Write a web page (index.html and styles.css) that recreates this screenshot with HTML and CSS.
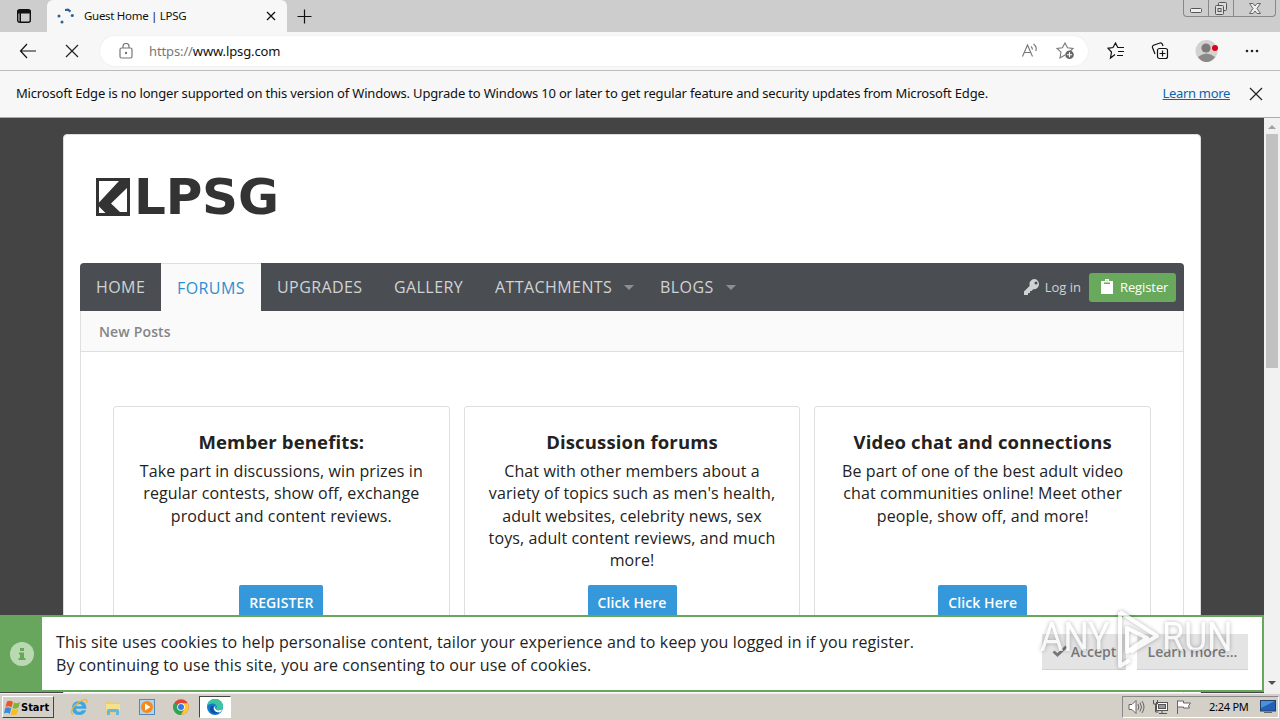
FILE: index.html
```html
<!DOCTYPE html>
<html lang="en">

<head>
    <meta charset="UTF-8">
    <meta name="viewport" content="width=device-width, initial-scale=1.0">
    <title>Guest Home | LPSG</title>
    <link rel="stylesheet" href="styles.css">
</head>

<body>
    <div class="tab-strip">
        <svg class="tab-menu-icon" width="16" height="16" viewBox="0 0 16 16">
            <rect x="1.7" y="1.7" width="12.6" height="12.6" rx="2" fill="none" stroke="#111" stroke-width="1.4"/>
            <path d="M1.5 2h13v3.5H5V14H3.500V5.500h-2z" fill="#111"/>
        </svg>
        <div class="tab">
            <svg width="18" height="18" viewBox="0 0 18 18" fill="#2a6496">
                <circle cx="2" cy="9" r="1.500"/>
                <circle cx="5" cy="15" r="1.500"/>
                <circle cx="15.300" cy="8.500" r="1.600"/>
                <path d="M8 3l3-.3 2.500 2" fill="none" stroke="#2a6496" stroke-width="2.200"/>
            </svg>
            <span class="tab-title">Guest Home | LPSG</span>
            <svg class="tab-close" width="10" height="10" viewBox="0 0 10 10">
                <path d="M1 1l8 8M9 1l-8 8" stroke="#111" stroke-width="1.300"/>
            </svg>
        </div>
        <svg class="tab-new" width="15" height="15" viewBox="0 0 15 15">
            <path d="M7.500 0.500v14M.5 7.500h14" stroke="#111" stroke-width="1.200"/>
        </svg>
        <div class="window-buttons">
            <span class="win-btn"><svg width="12" height="5" viewBox="0 0 12 5"><rect x=".5" y=".5" width="11" height="4" rx="1" fill="#eee" stroke="#555"/></svg></span>
            <span class="win-btn"><svg width="14" height="13" viewBox="0 0 14 13" fill="#ddd" stroke="#555"><rect x="4.500" y=".5" width="8" height="8" rx="1"/><rect x="1.500" y="3.500" width="8" height="9" rx="1"/><rect x="4" y="6.500" width="3" height="3"/></svg></span>
            <span class="win-btn wide"><svg width="12" height="11" viewBox="0 0 12 11"><path d="M.5.500h3.500l2 2.500 2-2.500h3.500l-3.500 5 3.500 5H8l-2-2.500-2 2.500H.5l3.500-5z" fill="#eee" stroke="#666"/></svg></span>
        </div>
    </div>

    <div class="toolbar">
        <svg class="back" width="18" height="16" viewBox="0 0 18 16" fill="none" stroke="#111" stroke-width="1.200">
            <path d="M8 1L1.500 8 8 15M1.500 8H17"/>
        </svg>
        <svg class="stop" width="14" height="14" viewBox="0 0 14 14">
            <path d="M1 1l12 12M13 1L1 13" stroke="#222" stroke-width="1.200"/>
        </svg>
        <div class="address">
            <svg width="14" height="16" viewBox="0 0 14 16" fill="none" stroke="#777" stroke-width="1.200">
                <rect x="1" y="5" width="12" height="10" rx="1.500"/>
                <path d="M4 5V3.500a3 3 0 0 1 6 0V5"/>
                <circle cx="7" cy="10" r=".6" fill="#777"/>
            </svg>
            <span class="url"><span class="scheme">https://</span>www.lpsg.com</span>
            <svg class="read-aloud" width="17" height="16" viewBox="0 0 17 16" fill="none" stroke="#777" stroke-width="1.100">
                <path d="M1.500 13.500L6.500 2l5 11.500M3.300 9.500h6.400M10 3.500c1 .8 1.500 2 1.200 3.200M12.500 1c2.500 1.800 3.300 4.500 2.200 7"/>
            </svg>
            <svg width="18" height="18" viewBox="0 0 18 18" fill="none" stroke="#777" stroke-width="1.100">
                <path d="M9 13l-5 3 1-5.800L1 6.500l5.400-.8L9 1l2.500 4.700 5.500.8-3 2.800"/>
                <circle cx="13.500" cy="12.800" r="4.300" fill="#666" stroke="none"/>
                <path d="M13.500 10.300v5M11 12.800h5" stroke="#fff"/>
            </svg>
        </div>
        <svg class="favorites" width="18" height="18" viewBox="0 0 18 18" fill="none" stroke="#111" stroke-width="1.200">
            <path d="M8 12.500L3.500 16l1-6L1 6.300l5-.8L8.500 1l2.300 4.500H17M11 9.500h6M10 13.500h6"/>
        </svg>
        <svg class="collections" width="18" height="18" viewBox="0 0 18 18" fill="none" stroke="#111" stroke-width="1.200">
            <rect x="6.500" y="6.500" width="10" height="10" rx="2"/>
            <path d="M11.500 8.500v6M8.500 11.500h6M4 12L1.500 5.500Q1 4 2.500 3.200L9 1q1.700-.4 2.500 1.500l.5 1.500"/>
        </svg>
        <svg class="profile" width="24" height="24" viewBox="0 0 24 24">
            <circle cx="11.500" cy="12" r="11" fill="#d3d2d1"/>
            <circle cx="11" cy="9" r="4.600" fill="#7d7b7a"/>
            <path d="M3 18q8.500-7 17 0-3.500 5-8.500 5T3 18z" fill="#8b8988"/>
            <circle cx="20" cy="9" r="3" fill="#e0001b"/>
        </svg>
        <svg class="more" width="14" height="4" viewBox="0 0 14 4" fill="#222">
            <circle cx="2" cy="2" r="1.300"/><circle cx="7" cy="2" r="1.300"/><circle cx="12" cy="2" r="1.300"/>
        </svg>
    </div>

    <div class="infobar">
        <span class="infobar-text">Microsoft Edge is no longer supported on this version of Windows. Upgrade to Windows 10 or later to get regular feature and security updates from Microsoft Edge.</span>
        <a class="infobar-link" href="#">Learn more</a>
        <svg width="14" height="14" viewBox="0 0 14 14">
            <path d="M1 1l12 12M13 1L1 13" stroke="#222" stroke-width="1.200"/>
        </svg>
    </div>

    <div class="viewport">
        <div class="page">
            <main class="wrapper">
                <header class="logo">
                    <svg width="34" height="38" viewBox="0 0 34 38">
                        <rect width="34" height="38" fill="#333"/>
                        <path d="M3 3h20L3 24.500zM31 10v24h-7l-9-8.500zM3 28.500V35h6.500z" fill="#fff"/>
                    </svg>
                    <span class="logo-text">LPSG</span>
                </header>

                <nav class="main-nav">
                    <a class="nav-home" href="#">HOME</a>
                    <a class="active" href="#">FORUMS</a>
                    <a class="nav-upgrades" href="#">UPGRADES</a>
                    <a class="nav-gallery" href="#">GALLERY</a>
                    <a class="nav-attachments" href="#">ATTACHMENTS<i class="caret"></i></a>
                    <a class="nav-blogs" href="#">BLOGS<i class="caret"></i></a>
                    <div class="account">
                        <a class="login" href="#">
                            <svg width="16" height="16" viewBox="0 0 16 16" fill="#d0d3d4">
                                <path fill-rule="evenodd" d="M10.500 0a5 5 0 0 0-4.700 6.800L0 12.500V16h4v-2h2v-2h1.500l1.700-1.800A5 5 0 1 0 10.500 0zM12 2.500a1.500 1.500 0 1 1 0 3 1.500 1.500 0 0 1 0-3z"/>
                            </svg>
                            <span>Log in</span>
                        </a>
                        <a class="register" href="#">
                            <svg width="12" height="16" viewBox="0 0 12 16" fill="#fff">
                                <path fill-rule="evenodd" d="M0 2h4V0h4v2h4v13H0zM3 3.500V5h6V3.500zM5.500 1.200v1h1v-1z"/>
                            </svg>
                            <span>Register</span>
                        </a>
                    </div>
                </nav>
                <div class="sub-nav"><a href="#">New Posts</a></div>

                <div class="cards">
                    <section class="card">
                        <h3>Member benefits:</h3>
                        <p>Take part in discussions, win prizes in<br>regular contests, show off, exchange<br>product and content reviews.</p>
                        <a class="button upper" href="#">REGISTER</a>
                    </section>
                    <section class="card">
                        <h3>Discussion forums</h3>
                        <p>Chat with other members about a<br>variety of topics such as men's health,<br>adult websites, celebrity news, sex<br>toys, adult content reviews, and much<br>more!</p>
                        <a class="button" href="#">Click Here</a>
                    </section>
                    <section class="card">
                        <h3>Video chat and connections</h3>
                        <p>Be part of one of the best adult video<br>chat communities online! Meet other<br>people, show off, and more!</p>
                        <a class="button" href="#">Click Here</a>
                    </section>
                </div>
            </main>

            <div class="cookie-notice">
                <div class="cookie-icon">
                    <svg width="24" height="24" viewBox="0 0 24 24">
                        <circle cx="12" cy="12" r="12" fill="#b9dab1"/>
                        <path d="M10 6h4v3h-4zM9 10.500h5V16h1.500v2H8.500v-2H10v-3.500H9z" fill="#68a55d"/>
                    </svg>
                </div>
                <p>This site uses cookies to help personalise content, tailor your experience and to keep you logged in if you register.<br>By continuing to use this site, you are consenting to our use of cookies.</p>
                <div class="cookie-buttons">
                    <a class="accept" href="#">
                        <svg width="16" height="12" viewBox="0 0 16 12"><path d="M1.500 6.500l4 3.500L14.500 1.500" fill="none" stroke="#777" stroke-width="2.800"/></svg>
                        <span>Accept</span>
                    </a>
                    <a class="learn" href="#">Learn more...</a>
                </div>
            </div>
        </div>
        <div class="scrollbar">
            <i class="arrow up"></i>
            <div class="thumb"></div>
            <i class="arrow down"></i>
        </div>
    </div>

    <footer class="taskbar">
        <div class="start">
            <svg width="17" height="15" viewBox="0 0 17 15">
                <path d="M3 1.500Q6 0 9 2L7.500 7.500Q4.500 5.500 1.500 7z" fill="#e8562a"/>
                <path d="M10 2.500q3 1.500 6-.5L14.500 7.500q-3 2-6 .5z" fill="#7db72f"/>
                <path d="M1.200 8q3-1.500 6 .5L5.700 14q-2.700-2-5.700-.5z" fill="#3a8bd8"/>
                <path d="M8.200 9q3 1.700 6-.3l-1.500 5.500q-3 1.700-6 .2z" fill="#f7bd1c"/>
            </svg>
            <span>Start</span>
        </div>
        <div class="quick-launch">
            <svg width="18" height="18" viewBox="0 0 18 18">
                <path d="M16.500 10.800H6q.3 3 3.200 3 2 0 2.800-1.500h4.200Q14.500 17 9 17 2 16.500 2 9.700 2.500 3 9.200 3q7.300.3 7.300 7.800zM6 8.200h6.200Q11.800 6 9.200 6 6.500 6 6 8.200z" fill="#3ba7e5" fill-rule="evenodd"/>
                <path d="M3 16.500C-1 14.500 3 8 9 4s9-3 7.500 1" fill="none" stroke="#e9b938" stroke-width="1.400"/>
            </svg>
            <svg width="18" height="18" viewBox="0 0 18 18">
                <path d="M1 3h5l1 1.500h9V15H1z" fill="#e8cf70"/>
                <path d="M2 6h14v7H2z" fill="#f3e190"/>
                <path d="M3 17v-4.500Q3 11 4.500 11h9q1.500 0 1.500 1.500V17h-3v-3H6v3z" fill="#68b7df"/>
            </svg>
            <svg width="18" height="18" viewBox="0 0 18 18">
                <rect x="1.500" y="1.500" width="15" height="15" fill="#b7d3ea" stroke="#5688b7"/>
                <circle cx="9" cy="9" r="6" fill="#f38b1c"/>
                <path d="M7 5.500l5.500 3.500L7 12.500z" fill="#fff"/>
            </svg>
            <svg width="18" height="18" viewBox="0 0 18 18">
                <circle cx="9" cy="9" r="7.800" fill="#e14335"/>
                <path d="M9 9L2.200 5.100A7.800 7.800 0 0 0 9 16.800l3.500-5.800z" fill="#31a354"/>
                <path d="M9 5.200h6.800A7.800 7.800 0 0 1 9 16.800l3.300-5.800z" fill="#fcc934"/>
                <circle cx="9" cy="9" r="3.800" fill="#fff"/>
                <circle cx="9" cy="9" r="3" fill="#3478e5"/>
            </svg>
        </div>
        <div class="task-active">
            <svg width="18" height="18" viewBox="0 0 18 18">
                <circle cx="9" cy="9" r="8" fill="#1679cf"/>
                <path d="M1.200 8C2 3 5 1 9 1c5 0 8 3.500 8 7 0 3-2.500 4-5 4-2 0-2.500-1-1.500-2 1-3-1.500-4.500-4-4.500S2 6.500 1.200 8z" fill="#3bc6a2"/>
                <path d="M7 8c-1 4 2 6.500 8 5-4.500 5-12 2-11-3 .5-2 2-3 3-2z" fill="#0b559f"/>
                <path d="M9.500 7.500Q8 12 12.500 12.500l4-1.300-2.500 3.300Q8 14.500 7.800 10z" fill="#fff"/>
            </svg>
        </div>
        <div class="tray">
            <svg width="17" height="16" viewBox="0 0 17 16" fill="none" stroke="#666">
                <path d="M1 5.500h3L8 1.500v13l-4-4H1z" fill="#fff"/>
                <path d="M10 5q1.500 3 0 6M12 3.500q3 4.500 0 9M14 2q4 6 0 12"/>
            </svg>
            <svg width="17" height="16" viewBox="0 0 17 16" fill="#fff" stroke="#555">
                <rect x="4.500" y="3.500" width="11" height="8"/>
                <rect x="6.500" y="5.500" width="7" height="4" fill="#999"/>
                <path d="M7 14.500h8M10 12v2M1.500 1v4h4V1M3.500 5v8h3" fill="none"/>
            </svg>
            <svg width="17" height="16" viewBox="0 0 17 16" fill="#fff" stroke="#666">
                <path d="M1.500 15V1.500M1.500 2h6v2h7l-2 3 1 2h-6V8h-6z"/>
            </svg>
            <span class="clock">2:24 PM</span>
            <svg width="16" height="14" viewBox="0 0 16 14">
                <rect x=".5" y=".5" width="15" height="10.500" fill="#2460b7" stroke="#244067"/>
                <path d="M1 1h14L1 8z" fill="#4c91dc"/>
                <path d="M4 12.500h8" stroke="#666"/>
            </svg>
        </div>
    </footer>

    <div class="watermark">
        <span class="mark-any">ANY</span>
        <svg width="48" height="66" viewBox="0 0 48 66" fill="none" stroke="#fff" stroke-width="4" stroke-linejoin="round">
            <path d="M6 4v54l10-6M6 4l37 24-27 16M13 20v24l20-14z"/>
        </svg>
        <span class="mark-run">RUN</span>
    </div>
</body>

</html>
```
FILE: styles.css
```css
* {
    box-sizing: border-box;
}

body {
    margin: 0;
    width: 1280px;
    height: 720px;
    overflow: hidden;
    display: flex;
    flex-direction: column;
    font-family: "Open Sans", sans-serif;
    color: #222;
}

a {
    color: inherit;
    text-decoration: none;
}

svg {
    display: block;
    flex: none;
}

/* browser */
.tab-strip {
    height: 32px;
    background: #cdcdcd;
    display: flex;
    align-items: center;
    flex: none;
}

.tab-menu-icon {
    margin: 0 15px 0 16px;
}

.tab {
    width: 240px;
    height: 32px;
    background: #f7f7f7;
    border-radius: 6px 6px 0 0;
    display: flex;
    align-items: center;
    padding: 0 11px 0 10px;
}

.tab-title {
    font: 11.5px "Noto Sans", sans-serif;
    letter-spacing: -0.3px;
    margin: 0 0 1px 9px;
    color: #111;
    white-space: nowrap;
}

.tab-close {
    margin-left: auto;
}

.tab-new {
    margin-left: 10px;
}

.window-buttons {
    display: flex;
    width: 93px;
    height: 17px;
    margin: 0 4px 0 auto;
    align-self: flex-start;
    border: 1px solid #888;
    border-top: 0;
    border-radius: 0 0 4px 4px;
}

.win-btn {
    width: 25px;
    display: flex;
    align-items: center;
    justify-content: center;
    border-right: 1px solid #888;
}

.win-btn:first-child {
    padding-top: 4px;
}

.win-btn.wide {
    width: 41px;
    border: 0;
}

.toolbar {
    height: 39px;
    background: #f7f7f7;
    border-bottom: 1px solid #bcbcbc;
    display: flex;
    align-items: center;
    flex: none;
}

.back {
    margin-left: 19px;
}

.stop {
    margin-left: 28px;
}

.address {
    width: 988px;
    height: 30px;
    margin-left: 21px;
    padding: 0 14px 0 19px;
    background: #fff;
    border-radius: 15px;
    display: flex;
    align-items: center;
    box-shadow: 0 0 2px #e4e4e4;
}

.url {
    font: 13px "Noto Sans", sans-serif;
    letter-spacing: -0.12px;
    color: #111;
    margin-left: 16px;
}

.scheme {
    color: #777;
}

.read-aloud {
    margin: 0 18px 0 auto;
}

.favorites {
    margin-left: 19px;
}

.collections {
    margin-left: 26px;
}

.profile {
    margin-left: 26px;
}

.more {
    margin-left: 26px;
}

.infobar {
    height: 47px;
    background: #f7f7f7;
    border-bottom: 1px solid #aaa;
    display: flex;
    align-items: center;
    padding: 0 17px 0 16px;
    font: 13px "Noto Sans", sans-serif;
    color: #111;
    flex: none;
}

.infobar-text {
    letter-spacing: -0.175px;
    margin-bottom: 2px;
    white-space: nowrap;
}

.infobar-link {
    color: #0b66b1;
    text-decoration: underline;
    letter-spacing: -0.33px;
    margin: 0 19px 2px auto;
}

.viewport {
    height: 575px;
    display: flex;
    flex: none;
}

.page {
    position: relative;
    width: 1264px;
    background: #444;
    overflow: hidden;
    padding: 16px 63px 0;
}

.scrollbar {
    width: 16px;
    background: #f1f1f1;
    display: flex;
    flex-direction: column;
    align-items: center;
}

.thumb {
    width: 12px;
    height: 234px;
    background: #c1c1c1;
    margin-top: 5px;
}

.arrow {
    border: 4px solid transparent;
}

.arrow.up {
    margin-top: 3px;
    border-bottom-color: #a3a3a3;
}

.arrow.down {
    margin: auto 0 4px;
    border-top-color: #505050;
}

/* site */
.wrapper {
    height: 620px;
    background: #fff;
    border: 1px solid #ddd;
    border-radius: 4px;
    padding: 0 16px;
}

.logo {
    height: 128px;
    padding: 43px 0 0 16px;
    display: flex;
    align-items: flex-start;
}

.logo-text {
    font: bold 50px/38px "DejaVu Sans", sans-serif;
    letter-spacing: -0.2px;
    color: #333;
    margin-left: 4px;
}

.main-nav {
    height: 48px;
    background: #4a4e52;
    color: #d0d3d4;
    border-radius: 4px 4px 0 0;
    display: flex;
    align-items: center;
    font-size: 16px;
}

.main-nav > a {
    height: 48px;
    line-height: 48px;
    padding-left: 16px;
    letter-spacing: 0.42px;
    white-space: nowrap;
}

.nav-home {
    width: 81px;
}

.main-nav > .active {
    width: 100px;
    background: #fafafa;
    color: #2e8ece;
    border-top: 1px solid #ddd;
}

.nav-upgrades {
    width: 117px;
}

.nav-gallery {
    width: 101px;
}

.nav-attachments {
    width: 165px;
}

.nav-attachments,
.nav-blogs {
    display: flex;
    align-items: center;
}

.caret {
    border: 5px solid transparent;
    border-top-color: #8d9092;
    border-bottom: 0;
    margin-left: 12px;
}

.account {
    margin: 0 8px 0 auto;
    display: flex;
    align-items: center;
    font-size: 13px;
}

.login {
    display: flex;
    align-items: center;
    gap: 5px;
    margin-right: 8px;
}

.register {
    width: 87px;
    height: 29px;
    padding-left: 12px;
    background: #68a95c;
    border-radius: 3px;
    color: #fff;
    display: flex;
    align-items: center;
    gap: 7px;
    letter-spacing: -0.1px;
}

.sub-nav {
    height: 41px;
    background: #fafafa;
    border: 1px solid #dfdfdf;
    border-top: 0;
    padding-left: 18px;
    font: 600 14px/41px "Open Sans", sans-serif;
    letter-spacing: 0.15px;
    color: #858585;
}

.cards {
    height: 400px;
    border: 1px solid #dfdfdf;
    border-top: 0;
    padding: 54px 32px 0;
    display: flex;
    gap: 14px;
}

.card {
    flex: 1;
    height: 260px;
    border: 1px solid #dfdfdf;
    border-radius: 3px;
    display: flex;
    flex-direction: column;
    align-items: center;
    text-align: center;
}

.card h3 {
    margin: 21px 0 0;
    font: bold 18.5px/27px "Open Sans", sans-serif;
    letter-spacing: 0.15px;
}

.card p {
    margin: 5px 0 0;
    height: 125px;
    font-size: 16px;
    line-height: 22.3px;
    letter-spacing: 0.11px;
    white-space: nowrap;
}

.button {
    height: 35px;
    width: 89px;
    background: #3498db;
    border-radius: 2px;
    color: #fff;
    font: 600 14px/35px "Open Sans", sans-serif;
    letter-spacing: 0.1px;
}

.button.upper {
    width: 84px;
}

/* pinned to the bottom of the page */
.cookie-notice {
    position: absolute;
    left: 0;
    bottom: 1px;
    width: 1264px;
    height: 77px;
    background: #fff;
    border: 2px solid #68a55d;
    border-left: 0;
    display: flex;
    align-items: center;
}

.cookie-icon {
    width: 42px;
    height: 73px;
    background: #68a55d;
    display: flex;
    align-items: center;
    padding-left: 10px;
}

.cookie-notice p {
    margin: 0 0 0 14px;
    font-size: 16px;
    line-height: 23px;
    letter-spacing: 0.11px;
    white-space: nowrap;
}

.cookie-buttons {
    margin: 0 14px 4px auto;
    display: flex;
    gap: 11px;
    font: 600 14px "Open Sans", sans-serif;
    color: #777;
}

.accept,
.learn {
    height: 36px;
    background: #e4e4e4;
    border-bottom: 1px solid #d2d2d2;
    display: flex;
    align-items: center;
    justify-content: center;
}

.accept {
    width: 84px;
    gap: 3px;
}

.learn {
    width: 111px;
}

/* taskbar */
.taskbar {
    height: 27px;
    background: #d4d0c8;
    border-top: 1px solid #f1efeb;
    display: flex;
    align-items: center;
    flex: none;
}

.start {
    width: 52px;
    height: 22px;
    margin-left: 2px;
    border: 1px solid #fff;
    border-right-color: #444;
    border-bottom-color: #444;
    display: flex;
    align-items: center;
    padding-left: 1px;
    font: bold 11px "DejaVu Sans Condensed", "Noto Sans", sans-serif;
    color: #000;
}

.quick-launch {
    display: flex;
    gap: 16px;
    margin-left: 16px;
}

.task-active {
    width: 32px;
    height: 22px;
    margin-left: 9px;
    background: #fff;
    border: 1px solid #444;
    border-right-color: #fff;
    border-bottom-color: #fff;
    display: flex;
    align-items: center;
    justify-content: center;
}

.tray {
    width: 157px;
    height: 22px;
    margin: 0 1px 0 auto;
    padding-left: 5px;
    border: 1px solid #888;
    border-right-color: #fff;
    border-bottom-color: #fff;
    display: flex;
    align-items: center;
    gap: 7px;
}

.clock {
    font: 11px "Noto Sans", sans-serif;
    letter-spacing: -0.25px;
    color: #000;
    margin: 0 4px 1px 9px;
    white-space: nowrap;
}

/* floats over everything */
.watermark {
    position: absolute;
    left: 1040px;
    top: 608px;
    width: 200px;
    height: 66px;
    display: flex;
    color: #fff;
    font: 36px/60px Roboto, sans-serif;
    letter-spacing: -0.3px;
    opacity: 0.75;
    filter: drop-shadow(0 0 2px rgba(0, 0, 0, 0.4));
    pointer-events: none;
}

.mark-any {
    width: 74px;
    transform: scaleY(1.15);
}

.mark-run {
    transform: scaleY(1.15);
}
```
